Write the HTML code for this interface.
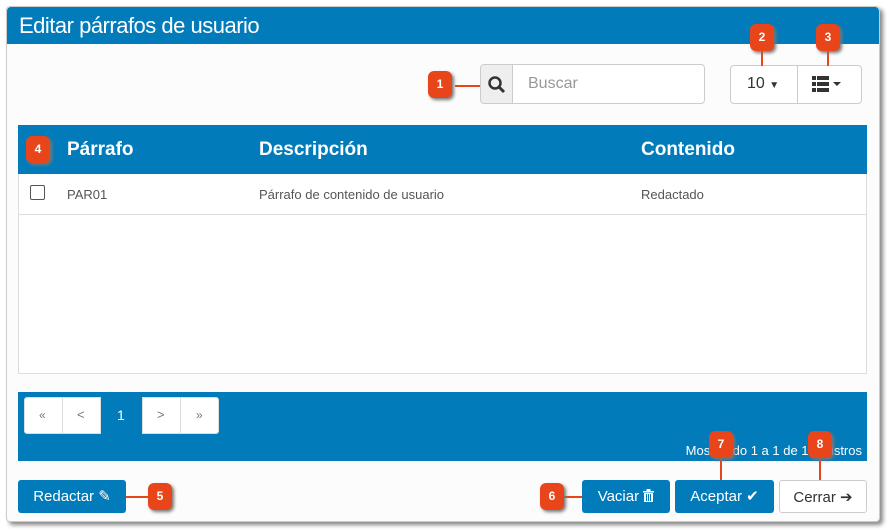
<!DOCTYPE html><html><head><meta charset="utf-8"><style>
*{box-sizing:border-box;margin:0;padding:0}
body{width:892px;height:532px;background:#fff;font-family:"Liberation Sans",sans-serif;position:relative;overflow:hidden}
.a{position:absolute}
.panel{left:6px;top:6px;width:874px;height:516px;background:#fcfcfc;border:1px solid #ccc;border-radius:4px;box-shadow:3px 3px 4px #888}
.hd{left:7px;top:7px;width:872px;height:37px;background:#017bba;border-radius:4px 4px 0 0;color:#fff;font-size:22px;padding:6px 0 0 12px;letter-spacing:-0.5px}
.b{background:#e8461a;color:#fff;font-size:12px;font-weight:bold;width:24px;height:27px;border-radius:6px;text-align:center;line-height:27px;box-shadow:2px 2px 3px #777}
.ln{background:#e8461a}
.btn{background:#017bba;color:#fff;font-size:15px;text-align:center;line-height:33px;border-radius:3px}
</style></head><body>
<div class="a panel"></div>
<div class="a hd">Editar párrafos de usuario</div>
<div class="a" style="left:480px;top:64px;width:225px;height:40px;border:1px solid #ccc;border-radius:4px;background:#fff"></div>
<div class="a" style="left:481px;top:65px;width:32px;height:38px;background:#eee;border-right:1px solid #ccc;border-radius:3px 0 0 3px"></div>
<svg class="a" style="left:487px;top:75px" width="20" height="20" viewBox="0 0 20 20"><circle cx="8" cy="8" r="5.5" fill="none" stroke="#333" stroke-width="2.5"/><line x1="12" y1="12" x2="17" y2="17" stroke="#333" stroke-width="3"/></svg>
<div class="a" style="left:528px;top:75px;color:#999;font-size:16px">Buscar</div>
<div class="a" style="left:730px;top:65px;width:132px;height:39px;border:1px solid #ccc;border-radius:4px;background:#fff"></div>
<div class="a" style="left:797px;top:65px;width:1px;height:39px;background:#ccc"></div>
<div class="a" style="left:747px;top:75px;font-size:16px;color:#333">10 <span style="font-size:10px">▼</span></div>
<svg class="a" style="left:812px;top:75px" width="34" height="18"><g fill="#333"><rect x="0" y="1" width="4" height="4"/><rect x="5" y="1" width="12" height="4"/><rect x="0" y="7" width="4" height="4"/><rect x="5" y="7" width="12" height="4"/><rect x="0" y="13" width="4" height="4"/><rect x="5" y="13" width="12" height="4"/><path d="M21 7h8l-4 4z"/></g></svg>
<div class="a" style="left:18px;top:125px;width:849px;height:249px;border:1px solid #ddd;background:#fff"></div>
<div class="a" style="left:18px;top:125px;width:849px;height:49px;background:#017bba;color:#fff;font-size:19px;font-weight:bold"><span class="a" style="left:49px;top:14px">Párrafo</span><span class="a" style="left:241px;top:14px">Descripción</span><span class="a" style="left:623px;top:14px">Contenido</span></div>
<div class="a" style="left:19px;top:214px;width:847px;height:1px;background:#ddd"></div>
<div class="a" style="left:30px;top:185px;width:15px;height:15px;border:1px solid #555;border-radius:2px"></div>
<div class="a" style="top:187px;left:67px;font-size:13px;color:#555">PAR01</div>
<div class="a" style="top:187px;left:259px;font-size:13px;color:#555">Párrafo de contenido de usuario</div>
<div class="a" style="top:187px;left:641px;font-size:13px;color:#555">Redactado</div>
<div class="a" style="left:18px;top:392px;width:849px;height:69px;background:#017bba"></div>
<div class="a" style="left:24px;top:397px;width:77px;height:37px;background:#fff;border:1px solid #ddd;border-radius:3px 0 0 3px"></div>
<div class="a" style="left:62px;top:397px;width:1px;height:37px;background:#ddd"></div>
<div class="a" style="left:101px;top:397px;width:41px;height:37px;background:#017bba"></div>
<div class="a" style="left:142px;top:397px;width:77px;height:37px;background:#fff;border:1px solid #ddd;border-radius:0 3px 3px 0"></div>
<div class="a" style="left:180px;top:397px;width:1px;height:37px;background:#ddd"></div>
<div class="a" style="top:408px;left:39px;font-size:12px;color:#777">«</div>
<div class="a" style="top:407px;left:77px;font-size:13px;color:#777">&lt;</div>
<div class="a" style="top:407px;left:117px;font-size:14px;color:#fff">1</div>
<div class="a" style="top:407px;left:157px;font-size:13px;color:#777">&gt;</div>
<div class="a" style="top:408px;left:196px;font-size:12px;color:#777">»</div>
<div class="a" style="top:443px;right:30px;font-size:13px;color:#fff">Mostrando 1 a 1 de 1 registros</div>
<div class="a btn" style="left:18px;top:480px;width:108px;height:33px">Redactar ✎</div>
<div class="a btn" style="left:582px;top:480px;width:88px;height:33px">Vaciar <svg width="11" height="13" viewBox="0 0 11 13" style="vertical-align:-1px"><path d="M0 2h11v1.5H0zM3.5 0h4v2h-4zM1 4h9v9H1z" fill="#fff"/><path d="M3.5 5v7M5.5 5v7M7.5 5v7" stroke="#017bba" stroke-width="1"/></svg></div>
<div class="a btn" style="left:675px;top:480px;width:99px;height:33px">Aceptar ✔</div>
<div class="a btn" style="left:779px;top:480px;width:88px;height:33px;background:#fff;color:#333;border:1px solid #ccc">Cerrar ➔</div>
<div class="a ln" style="left:455px;top:85px;width:25px;height:2px"></div>
<div class="a ln" style="left:761px;top:50px;width:2px;height:16px"></div>
<div class="a ln" style="left:827px;top:50px;width:2px;height:16px"></div>
<div class="a ln" style="left:126px;top:496px;width:22px;height:2px"></div>
<div class="a ln" style="left:564px;top:496px;width:18px;height:2px"></div>
<div class="a ln" style="left:720px;top:456px;width:2px;height:24px"></div>
<div class="a ln" style="left:819px;top:456px;width:2px;height:24px"></div>
<div class="a b" style="left:428px;top:71px">1</div>
<div class="a b" style="left:750px;top:24px">2</div>
<div class="a b" style="left:816px;top:24px">3</div>
<div class="a b" style="left:26px;top:136px">4</div>
<div class="a b" style="left:148px;top:483px">5</div>
<div class="a b" style="left:540px;top:483px">6</div>
<div class="a b" style="left:709px;top:431px">7</div>
<div class="a b" style="left:808px;top:431px">8</div>
</body></html>
